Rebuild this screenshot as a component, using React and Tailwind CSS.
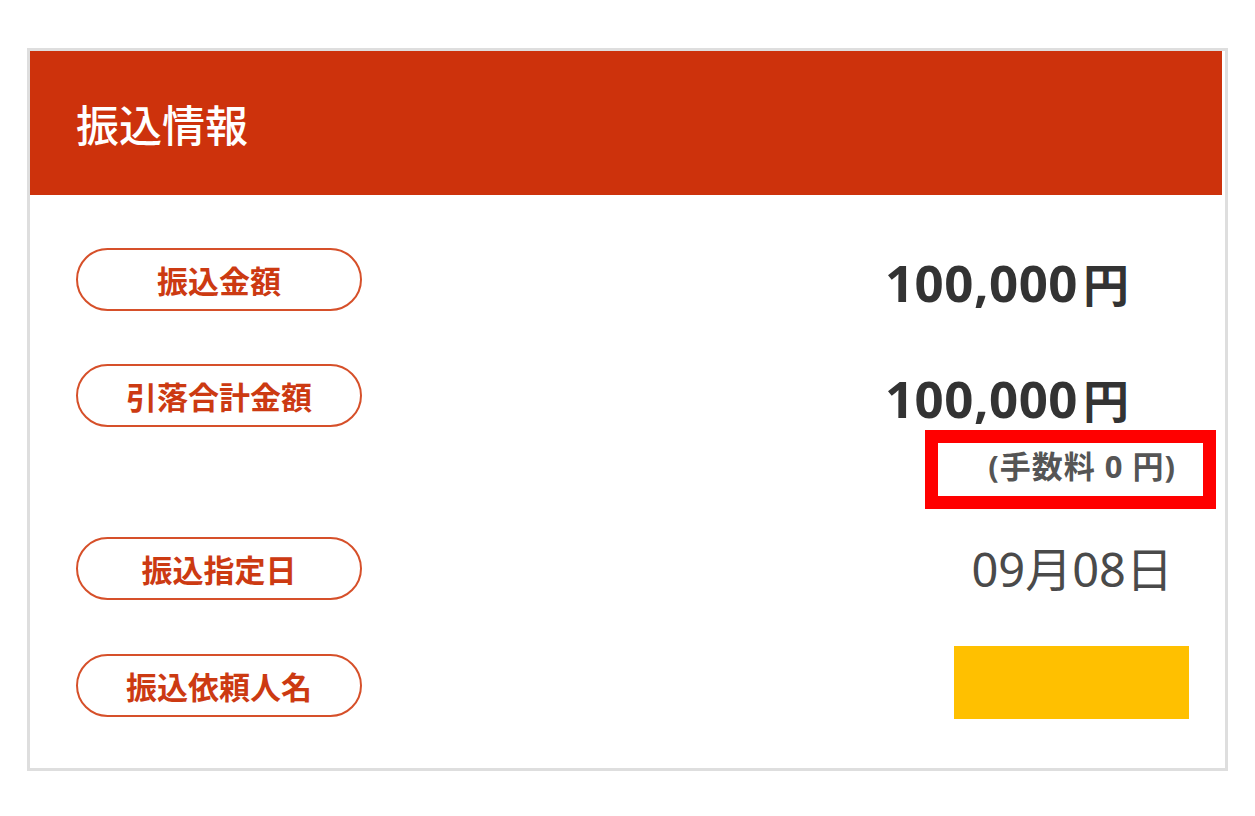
export default function App() {
  const rows = [
    { label: '振込金額', value: '100,000' },
    { label: '引落合計金額', value: '100,000' },
  ];

  return (
    <div className="min-h-screen bg-white pt-[48px] pl-[27px] font-['Noto_Sans_CJK_JP','Noto_Sans',sans-serif]">
      <div className="w-[1201px] h-[723px] border-[3px] border-[#dedede] bg-white flex flex-col">
        {/* Header */}
        <div className="h-[144px] mr-[3px] bg-[#cd320c] flex items-center pl-[46px]">
          <h2 className="text-[43px] font-medium leading-none text-white">振込情報</h2>
        </div>

        {/* Body */}
        <div className="flex flex-col pl-[46px]">
          {rows.map((r, i) => (
            <div key={i} className="flex items-center mt-[53px]">
              <Pill label={r.label} />
              <div className="ml-auto mr-[96px] flex items-baseline gap-[5px] leading-none text-[#333333] pt-[6px]">
                <span className="font-['Noto_Sans','Noto_Sans_CJK_JP',sans-serif] text-[51px] font-bold tracking-[0.5px]">{r.value}</span>
                <span className="text-[46px] font-bold">円</span>
              </div>
            </div>
          ))}

          {/* Fee note */}
          <div className="flex justify-end mt-[3px] mr-[9px]">
            <div className="w-[291px] h-[79px] border-[13px] border-[#ff0000] bg-white flex items-center justify-end pr-[27px]">
              <span className="font-['Noto_Sans','Noto_Sans_CJK_JP',sans-serif] text-[31px] font-bold leading-none text-[#555555] pb-[6px] tracking-[1px]">(手数料 0 円)</span>
            </div>
          </div>

          <div className="flex items-center mt-[28px]">
            <Pill label="振込指定日" />
            <div className="ml-auto mr-[52px] font-['Noto_Sans','Noto_Sans_CJK_JP',sans-serif] text-[47px] font-normal leading-none text-[#4a4a4a] pt-[2px]">
              09月08日
            </div>
          </div>

          <div className="flex items-center mt-[52px]">
            <Pill label="振込依頼人名" />
            <div className="ml-auto mr-[36px] w-[235px] h-[73px] bg-[#ffc000] mt-[-6px]" />
          </div>
        </div>
      </div>
    </div>
  );
}

function Pill({ label }) {
  return (
    <div className="w-[286px] h-[63px] rounded-full border-2 border-[#d6502a] flex items-center justify-center">
      <span className="text-[31px] font-bold leading-none text-[#cc3a12]">{label}</span>
    </div>
  );
}
